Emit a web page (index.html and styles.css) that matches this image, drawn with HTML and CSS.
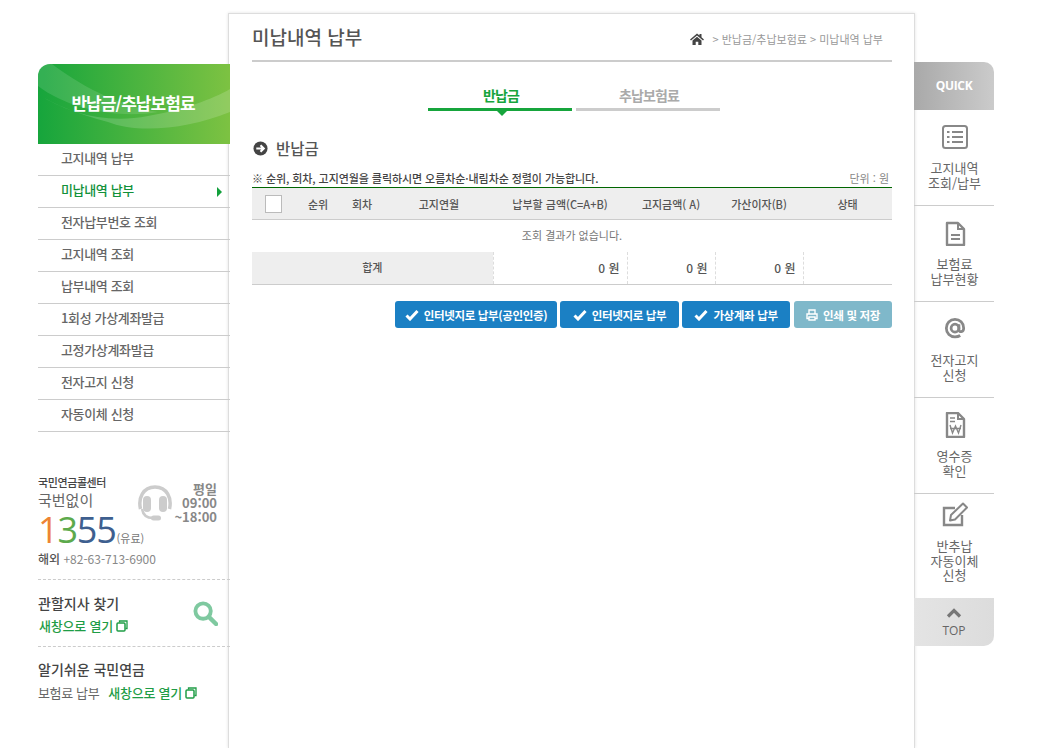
FILE: index.html
```html
<!DOCTYPE html>
<html lang="ko">
<head>
<meta charset="utf-8">
<title>미납내역 납부</title>
<link rel="stylesheet" href="styles.css">
</head>
<body>
<div class="page">
  <aside class="left">
    <h2 class="banner"><svg class="banner-art" viewBox="0 0 192 80" preserveAspectRatio="none"><path d="M0 30C30 50 70 60 110 52C145 46 175 35 192 25V48C150 65 100 70 70 58C40 50 15 40 0 30Z" fill="#fff" opacity=".16"/><path d="M0 0H14C40 20 80 42 120 48C80 55 30 45 0 22Z" fill="#fff" opacity=".12"/></svg><span>반납금/추납보험료</span></h2>
    <ul class="menu">
      <li>고지내역 납부</li>
      <li class="on">미납내역 납부</li>
      <li>전자납부번호 조회</li>
      <li>고지내역 조회</li>
      <li>납부내역 조회</li>
      <li>1회성 가상계좌발급</li>
      <li>고정가상계좌발급</li>
      <li>전자고지 신청</li>
      <li>자동이체 신청</li>
    </ul>
    <section class="call">
      <div class="call-left">
        <div class="call-t">국민연금콜센터</div>
        <div class="call-s">국번없이</div>
        <div class="call-n"><b class="d1">1</b><b class="d3">3</b><b class="d5">55</b><small>(유료)</small></div>
      </div>
      <svg class="headset" viewBox="0 0 36 36"><path d="M3.500 24C1 13 6 2 18 2S35 13 32.500 24" fill="none" stroke="#ccc" stroke-width="3.500"/><rect x="6" y="11" width="8" height="16" rx="4" fill="#ccc"/><rect x="22" y="11" width="8" height="16" rx="4" fill="#ccc"/><path d="M5 24C6 30 10 33 16 33" fill="none" stroke="#ccc" stroke-width="2.500"/><rect x="14" y="30.500" width="10" height="5" rx="2.500" fill="#ccc"/></svg>
      <div class="call-h">평일<br>09:00<br>~18:00</div>
      <div class="call-o"><b>해외</b> +82-63-713-6900</div>
    </section>
    <section class="box find">
      <div>
        <h3>관할지사 찾기</h3>
        <a class="open">새창으로 열기 <svg class="copy" viewBox="0 0 12 12"><path d="M3.500 2.500V1H11V8.500H9.500" fill="none" stroke="currentColor" stroke-width="1.300"/><rect x="1" y="3" width="8" height="8" rx="1" fill="none" stroke="currentColor" stroke-width="1.500"/></svg></a>
      </div>
      <svg class="search" viewBox="0 0 26 26"><circle cx="10.500" cy="10.500" r="8" fill="none" stroke="#7fc9a0" stroke-width="4"/><path d="M16.500 16.500L24 24" stroke="#7fc9a0" stroke-width="4.500" stroke-linecap="round"/></svg>
    </section>
    <section class="box easy">
      <h3>알기쉬운 국민연금</h3>
      <div class="easy-row"><span>보험료 납부</span><a class="open">새창으로 열기 <svg class="copy" viewBox="0 0 12 12"><path d="M3.500 2.500V1H11V8.500H9.500" fill="none" stroke="currentColor" stroke-width="1.300"/><rect x="1" y="3" width="8" height="8" rx="1" fill="none" stroke="currentColor" stroke-width="1.500"/></svg></a></div>
    </section>
  </aside>

  <main class="main">
    <header class="head">
      <h1>미납내역 납부</h1>
      <div class="crumb"><svg class="home" viewBox="0 0 14 12"><path d="M7 0.500L0 6.500L1 7.500L7 2.500L13 7.500L14 6.500L11.500 4.300V1H9.500V2.600Z" fill="#444"/><path d="M2.500 7.500L7 3.700L11.500 7.500V12H8.300V8.800H5.700V12H2.500Z" fill="#444"/></svg><span>&gt; 반납금/추납보험료 &gt; 미납내역 납부</span></div>
    </header>
    <nav class="tabs">
      <a class="tab active">반납금</a>
      <a class="tab">추납보험료</a>
    </nav>
    <h2 class="sec"><svg class="arrow" viewBox="0 0 16 16"><circle cx="8" cy="8" r="7.500" fill="#444"/><path d="M3.500 8H11.500M8 4.500L11.500 8L8 11.500" fill="none" stroke="#fff" stroke-width="2.200"/></svg>반납금</h2>
    <div class="note"><b>※ 순위, 회차, 고지연월을 클릭하시면 오름차순·내림차순 정렬이 가능합니다.</b><span>단위 : 원</span></div>
    <table class="grid">
      <colgroup><col class="c1"><col class="c2"><col class="c3"><col class="c4"><col class="c5"><col class="c6"><col class="c7"><col></colgroup>
      <thead>
        <tr>
          <th><span class="check"></span></th><th>순위</th><th>회차</th><th class="th-month">고지연월</th><th class="th-pay">납부할 금액(C=A+B)</th><th>고지금액( A)</th><th>가산이자(B)</th><th>상태</th>
        </tr>
      </thead>
      <tbody>
        <tr class="empty"><td colspan="8">조회 결과가 없습니다.</td></tr>
      </tbody>
      <tfoot>
        <tr><th colspan="4">합계</th><td>0 원</td><td>0 원</td><td>0 원</td><td></td></tr>
      </tfoot>
    </table>
    <div class="btns">
      <a class="btn w1"><svg class="tick" viewBox="0 0 14 12"><path d="M1.500 6.500L5 10L12.500 2" fill="none" stroke="#fff" stroke-width="3"/></svg>인터넷지로 납부(공인인증)</a>
      <a class="btn w2"><svg class="tick" viewBox="0 0 14 12"><path d="M1.500 6.500L5 10L12.500 2" fill="none" stroke="#fff" stroke-width="3"/></svg>인터넷지로 납부</a>
      <a class="btn w3"><svg class="tick" viewBox="0 0 14 12"><path d="M1.500 6.500L5 10L12.500 2" fill="none" stroke="#fff" stroke-width="3"/></svg>가상계좌 납부</a>
      <a class="btn w4 off"><svg class="print" viewBox="0 0 12 12"><path d="M3 4.500V1H9V4.500M3 9.500H1V5H11V9.500H9M3 8H9V11H3Z" fill="none" stroke="#fff" stroke-width="1.400"/></svg>인쇄 및 저장</a>
    </div>
  </main>

  <aside class="right">
    <div class="quick">QUICK</div>
    <a class="qi"><svg viewBox="0 0 26 24"><rect x="1" y="1" width="24" height="22" rx="2.500" fill="none" stroke="#888" stroke-width="2"/><path d="M5 7H7.500M5 12H7.500M5 17H7.500M10 7H21M10 12H21M10 17H21" stroke="#888" stroke-width="2"/></svg><span>고지내역<br>조회/납부</span></a>
    <a class="qi"><svg viewBox="0 -2 26 26"><path d="M5 1H16L22 7V23H5Z" fill="none" stroke="#888" stroke-width="2.400" stroke-linejoin="round"/><path d="M16 1V7H22" fill="none" stroke="#888" stroke-width="2"/><path d="M9 13H18M9 17H18" stroke="#888" stroke-width="2"/></svg><span>보험료<br>납부현황</span></a>
    <a class="qi"><svg viewBox="-2 -2 30 30"><circle cx="13" cy="12" r="4.500" fill="none" stroke="#888" stroke-width="3.200"/><path d="M17.500 7.500V14C17.500 17 23 17 23 12C23 6 18.500 2 13 2C7 2 3 6.500 3 12C3 18 7.500 22 13 22C15.500 22 17.500 21.500 19 20.500" fill="none" stroke="#888" stroke-width="3.200"/></svg><span>전자고지<br>신청</span></a>
    <a class="qi"><svg viewBox="0 0 26 26"><path d="M5 1H16L22 7V25H5Z" fill="none" stroke="#888" stroke-width="2.400" stroke-linejoin="round"/><path d="M16 1V7H22" fill="none" stroke="#888" stroke-width="2"/><path d="M8 6H13M8 9.500H13" stroke="#888" stroke-width="1.500"/><path d="M8 13L10.500 21L13.500 14L16.500 21L19 13M8 16.500H19" fill="none" stroke="#888" stroke-width="1.400"/></svg><span>영수증<br>확인</span></a>
    <a class="qi last"><svg viewBox="0 0 26 26"><path d="M20 13V23H2V6H13" fill="none" stroke="#888" stroke-width="2.400"/><path d="M9 13L21 1.500L25 5.500L13 17.500L8 18.500Z" fill="none" stroke="#888" stroke-width="2" stroke-linejoin="round"/></svg><span>반추납<br>자동이체<br>신청</span></a>
    <a class="top"><svg viewBox="0 0 16 10"><path d="M2 8.500L8 2.500L14 8.500" fill="none" stroke="#777" stroke-width="3.200"/></svg><span>TOP</span></a>
  </aside>
</div>
</body>
</html>
```
FILE: styles.css
```css
* { box-sizing: border-box; }
html, body { margin: 0; height: 100%; overflow: hidden; background: #fff; }
body { font-family: "Noto Sans CJK KR", "Noto Sans", sans-serif; font-size: 13px; color: #555; }
h1, h2, h3, ul { margin: 0; padding: 0; list-style: none; font-weight: 500; }

.page { display: flex; align-items: stretch; height: 748px; padding-left: 38px; }

/* left column */
.left { width: 192px; flex: none; padding-top: 64px; position: relative; z-index: 1; }
.banner { position: relative; height: 80px; padding-bottom: 4px; border-radius: 12px 0 0 0; overflow: hidden; background: linear-gradient(90deg, #16a53c, #7dc242); color: #fff; font-size: 17px; font-weight: 700; letter-spacing: -.95px; display: flex; align-items: center; justify-content: center; }
.banner span { position: relative; left: -1px; }
.banner-art { position: absolute; inset: 0; width: 100%; height: 100%; }
.menu li { height: 32px; line-height: 28px; padding-left: 23px; border-bottom: 1px solid #ccc; color: #666; font-size: 13px; letter-spacing: -.35px; position: relative; }
.menu li.on { color: #12913a; font-weight: 500; }
.menu li.on::after { content: ""; position: absolute; right: 8px; top: 11px; border-left: 5px solid #12a03c; border-top: 5px solid transparent; border-bottom: 5px solid transparent; }

.call { display: grid; grid-template-columns: 99px 36px 44px; grid-template-rows: 75px auto; align-content: start; margin-top: 42px; height: 106px; border-bottom: 1px dashed #ccc; }
.call-left { grid-column: 1; grid-row: 1; }
.call-t { font-size: 11px; font-weight: 500; color: #444; line-height: 16px; letter-spacing: -.4px; }
.call-s { font-size: 15px; line-height: 20px; color: #666; }
.call-n { font-family: "Open Sans", "Noto Sans", sans-serif; font-size: 36px; line-height: 38px; margin-top: 1px; white-space: nowrap; letter-spacing: -1.2px; width: 110px; }
.call-n b { font-weight: 400; }
.call-n small { font-family: "Noto Sans CJK KR", sans-serif; font-size: 11px; letter-spacing: 0; color: #777; margin-left: 1px; }
.d1 { color: #ee8434; }
.d3 { color: #5daa4c; }
.d5 { color: #3e5f8f; }
.headset { width: 36px; height: 36px; grid-column: 2; grid-row: 1; margin-top: 11px; }
.call-h { grid-column: 3; grid-row: 1; text-align: right; font-size: 13px; line-height: 14px; font-weight: 700; color: #888; padding-top: 8px; white-space: nowrap; }
.call-o { grid-column: 1 / -1; grid-row: 2; font-size: 12px; color: #888; line-height: 16px; margin-top: 2px; }
.call-o b { font-weight: 500; color: #555; }

.box h3 { font-size: 14px; color: #444; line-height: 20px; }
.find { display: flex; justify-content: space-between; height: 67px; padding: 13px 12px 0 0; border-bottom: 1px dashed #ccc; }
.open { color: #1f9d46; font-size: 13px; font-weight: 500; line-height: 18px; letter-spacing: -.2px; display: inline-flex; align-items: center; gap: 3px; }
.find .open { margin-top: 4px; padding-left: 1px; }
.copy { width: 12px; height: 12px; }
.search { width: 25px; height: 25px; margin-top: 8px; }
.easy { padding-top: 12px; }
.easy-row { display: flex; align-items: center; gap: 9px; margin-top: 3px; line-height: 22px; font-size: 13px; color: #666; letter-spacing: -.35px; }
.easy-row .open { letter-spacing: -.25px; }

/* main */
.main { flex: none; width: 687px; margin: 13px 0 0 -2px; padding: 0 22px 0 23px; background: #fff; border: 1px solid #ddd; border-bottom: 0; box-shadow: 0 0 3px rgba(0,0,0,.12); }
.head { display: flex; justify-content: space-between; align-items: center; height: 48px; border-bottom: 2px solid #ccc; }
.head h1 { font-size: 19px; font-weight: 500; color: #555; position: relative; top: -1px; }
.crumb { display: flex; align-items: center; gap: 8px; font-size: 11px; color: #999; padding-right: 9px; position: relative; top: 2px; }
.home { width: 14px; height: 12px; }
.tabs { display: flex; justify-content: center; gap: 4px; margin: 22px 0 0 4px; }
.tab { width: 144px; height: 27px; padding-left: 2px; border-bottom: 3px solid #ccc; text-align: center; font-size: 14px; font-weight: 700; line-height: 22px; color: #aaa; letter-spacing: -.85px; position: relative; }
.tab.active { border-bottom-color: #16a53c; color: #16a53c; }
.tab.active::after { content: ""; position: absolute; left: 69px; top: 27px; border-top: 5px solid #16a53c; border-left: 5px solid transparent; border-right: 5px solid transparent; }
.sec { display: flex; align-items: center; gap: 8px; margin-top: 25px; height: 24px; font-size: 15.500px; color: #555; padding-left: 1px; }
.arrow { width: 15px; height: 15px; }
.note { display: flex; justify-content: space-between; align-items: center; height: 19px; margin-top: 8px; font-size: 11px; padding-right: 3px; }
.note b { font-weight: 500; color: #444; letter-spacing: -.07px; }
.note span { color: #888; }

.grid { width: 640px; table-layout: fixed; border-collapse: collapse; border-top: 1px solid #060; font-size: 11px; }
.c1 { width: 42px; }
.c2 { width: 48px; }
.c3 { width: 40px; }
.c4 { width: 111px; }
.c5 { width: 134px; }
.c6, .c7 { width: 88px; }
.grid thead th { height: 32px; background: #eee; border-bottom: 1px solid #ccc; font-weight: 500; color: #555; padding: 0; }
.th-month { padding-left: 3px !important; }
.th-pay { white-space: nowrap; }
.check { display: block; width: 17px; height: 18px; margin-left: 13px; background: #fff; border: 1px solid #bbb; }
.empty td { height: 32px; text-align: center; color: #777; font-size: 11px; padding: 0 0 2px; }
.grid tfoot tr { border-bottom: 1px solid #ccc; }
.grid tfoot th { height: 33px; background: #eee; font-weight: 500; color: #555; padding: 0 0 1px; }
.grid tfoot td { text-align: right; padding: 0 7px 1px 0; font-size: 12px; color: #555; font-weight: 500; border-right: 1px dashed #ddd; border-left: 1px dashed #ddd; }
.grid tfoot td:last-child { border-right: 0; }

.btns { display: flex; justify-content: flex-end; gap: 3px; margin-top: 16px; }
.btn { height: 27px; border-radius: 3px; background: #1b80c4; color: #fff; font-size: 11.500px; font-weight: 700; display: flex; align-items: center; justify-content: center; gap: 5px; letter-spacing: -.35px; white-space: nowrap; }
.btn.off { background: #7fb8ca; margin-left: 1px; }
.w1 { width: 162px; }
.w2 { width: 119px; }
.w3 { width: 108px; }
.w4 { width: 98px; }
.tick { width: 14px; height: 12px; }
.print { width: 12px; height: 12px; }

/* right */
.right { flex: none; width: 80px; margin: 62px 0 0 -1px; position: relative; z-index: 1; }
.quick { height: 48px; padding-bottom: 2px; border-radius: 0 10px 0 0; background: linear-gradient(90deg, #a9a9a9, #cbcbcb); color: #fff; font-family: "Open Sans", sans-serif; font-size: 12px; font-weight: 700; letter-spacing: -.3px; display: flex; align-items: center; justify-content: center; }
.qi { display: flex; flex-direction: column; align-items: center; height: 96px; padding: 14px 0 0 1px; border-bottom: 1px solid #ccc; text-align: center; font-size: 13px; line-height: 14.500px; color: #666; }
.qi svg { width: 26px; height: 26px; flex: none; }
.qi span { margin-top: 11px; }
.qi.last { height: 104px; padding-top: 8px; border-bottom: 0; }
.top { display: flex; flex-direction: column; align-items: center; height: 48px; padding-top: 10px; border-radius: 0 0 10px 0; background: linear-gradient(90deg, #e4e4e4, #dcdcdc); font-size: 12px; color: #666; line-height: 14px; }
.top svg { width: 16px; height: 10px; }
.top span { margin-top: 6px; font-family: "Open Sans", sans-serif; }
```
